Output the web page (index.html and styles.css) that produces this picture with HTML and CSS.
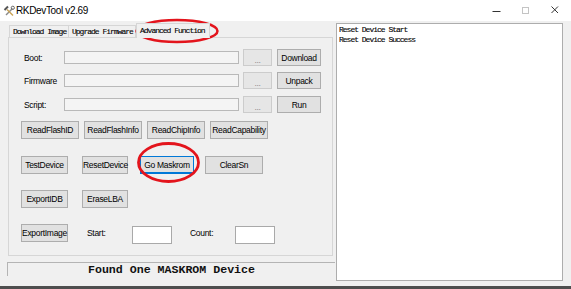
FILE: index.html
```html
<!DOCTYPE html>
<html>
<head>
    <title>RKDevTool v2.69</title>
    <link rel="stylesheet" href="styles.css">
</head>
<body>
<div class="window">
    <div class="titlebar">
        <svg class="app-icon" viewBox="0 0 12 12">
            <path d="M3 10 L9.5 3.5" stroke="#8a8a8a" stroke-width="1.4" fill="none"/>
            <circle cx="9.8" cy="2.8" r="1.6" stroke="#6a6a6a" stroke-width="1" fill="none"/>
            <path d="M10 10.5 L4 4.5" stroke="#c9a255" stroke-width="1.4" fill="none"/>
            <path d="M1.5 5 L5 1.5" stroke="#555" stroke-width="2" fill="none"/>
        </svg>
        <span class="title">RKDevTool v2.69</span>
        <div class="controls">
            <span class="ctl"><svg viewBox="0 0 29 21"><path d="M10.5 11.5 H18.5" stroke="#333" stroke-width="1"/></svg></span>
            <span class="ctl"><svg viewBox="0 0 29 21"><rect x="11.5" y="7.5" width="6" height="6" stroke="#c4c4c4" fill="none"/></svg></span>
            <span class="ctl"><svg viewBox="0 0 29 21"><path d="M11.5 6.5 L18 13 M18 6.5 L11.5 13" stroke="#333" stroke-width="1"/></svg></span>
        </div>
    </div>

    <div class="main">
        <div class="left">
            <div class="tabs">
                <div class="tab tab-download">Download Image</div>
                <div class="tab tab-upgrade">Upgrade Firmware</div>
                <div class="tab tab-advanced active">Advanced Function</div>
            </div>

            <div class="panel">
                <div class="file-row">
                    <span class="field-label">Boot:</span>
                    <input class="path-input" type="text">
                    <button class="btn btn-dots">...</button>
                    <button class="btn btn-action">Download</button>
                </div>
                <div class="file-row">
                    <span class="field-label">Firmware</span>
                    <input class="path-input" type="text">
                    <button class="btn btn-dots">...</button>
                    <button class="btn btn-action">Unpack</button>
                </div>
                <div class="file-row row-script">
                    <span class="field-label">Script:</span>
                    <input class="path-input" type="text">
                    <button class="btn btn-dots">...</button>
                    <button class="btn btn-action">Run</button>
                </div>

                <div class="btn-row row-read">
                    <button class="btn btn-read">ReadFlashID</button>
                    <button class="btn btn-read">ReadFlashInfo</button>
                    <button class="btn btn-read">ReadChipInfo</button>
                    <button class="btn btn-read">ReadCapability</button>
                </div>
                <div class="btn-row row-device">
                    <button class="btn btn-first">TestDevice</button>
                    <button class="btn btn-second">ResetDevice</button>
                    <button class="btn btn-maskrom focused">Go Maskrom</button>
                    <button class="btn btn-clear">ClearSn</button>
                </div>
                <div class="btn-row">
                    <button class="btn btn-first">ExportIDB</button>
                    <button class="btn btn-second">EraseLBA</button>
                </div>
                <div class="btn-row">
                    <button class="btn btn-first">ExportImage</button>
                    <span class="small-label">Start:</span>
                    <input class="num-input" type="text">
                    <span class="small-label label-count">Count:</span>
                    <input class="num-input" type="text">
                </div>
            </div>

            <div class="status">Found One MASKROM Device</div>
        </div>

        <div class="log">
            <div>Reset Device Start</div>
            <div>Reset Device Success</div>
        </div>
    </div>

    <div class="edge"></div>

    <svg class="marks" viewBox="0 0 571 289">
        <ellipse cx="177" cy="31" rx="40.5" ry="11" fill="none" stroke="#e3141c" stroke-width="2.5"/>
        <ellipse cx="168.5" cy="162.5" rx="30" ry="19" fill="none" stroke="#e3141c" stroke-width="2.8"/>
    </svg>
</div>
</body>
</html>
```

FILE: styles.css
```css
body {
    margin: 0;
    font-family: "Liberation Sans", Arial, sans-serif;
    background-color: #f0f0f0;
}

.window {
    position: relative;
    width: 571px;
    height: 289px;
    display: flex;
    flex-direction: column;
    overflow: hidden;
}

/* title bar */
.titlebar {
    height: 21px;
    flex-shrink: 0;
    display: flex;
    align-items: center;
    background-color: #fff;
}

.app-icon {
    width: 12px;
    height: 12px;
    margin-left: 3px;
    margin-right: 1px;
}

.title {
    font-size: 10px;
    letter-spacing: -0.35px;
    color: #000;
}

.controls {
    margin-left: auto;
    margin-right: 2px;
    display: flex;
}

.ctl {
    width: 29px;
    height: 21px;
}

.ctl svg {
    display: block;
    width: 29px;
    height: 21px;
}

/* client area */
.main {
    flex: 1;
    display: flex;
}

.left {
    width: 336px;
    flex-shrink: 0;
}

.tabs {
    height: 16px;
    display: flex;
    align-items: flex-end;
    padding-left: 9px;
}

.tab {
    height: 12px;
    line-height: 12px;
    box-sizing: border-box;
    padding: 0 3px;
    border: 1px solid #d6d6d6;
    border-bottom: none;
    font-family: "Liberation Mono", monospace;
    font-size: 8px;
    letter-spacing: -1px;
    -webkit-text-stroke: 0.12px #000;
    color: #000;
    white-space: nowrap;
}

.tab-download { width: 60px; }
.tab-upgrade { width: 67px; border-left: none; }
.tab-advanced { width: 74px; }

.tab.active {
    position: relative;
    z-index: 1;
    height: 15px;
    line-height: 13px;
    margin-bottom: -1px;
    background-color: #f0f0f0;
}

.panel {
    margin-left: 8px;
    width: 325px;
    height: 219px;
    box-sizing: border-box;
    border: 1px solid #d6d6d6;
    padding-top: 11px;
}

.file-row {
    height: 17px;
    display: flex;
    align-items: center;
    padding-left: 15px;
}

.file-row + .file-row {
    margin-top: 6px;
}

.file-row.row-script {
    margin-top: 7px;
}

.field-label {
    width: 40px;
    font-size: 8.5px;
    letter-spacing: -0.3px;
    color: #000;
}

.path-input {
    width: 175px;
    height: 13px;
    box-sizing: border-box;
    margin: 0 4px 0 0;
    padding: 0;
    border: 1px solid #b9b9b9;
    background-color: #f4f4f4;
}

.btn {
    height: 18px;
    box-sizing: border-box;
    padding: 0;
    margin: 0;
    border: 1px solid #adadad;
    background-color: #e1e1e1;
    font-family: "Liberation Sans", Arial, sans-serif;
    font-size: 8.5px;
    letter-spacing: -0.3px;
    color: #000;
    white-space: nowrap;
}

.btn-dots {
    width: 29px;
    height: 17px;
    margin-right: 5px;
    border-color: #cccccc;
    background-color: #e6e6e6;
    color: #8c8c8c;
    padding-top: 4px;
}

.btn-action {
    width: 44px;
    height: 17px;
}

.btn-row {
    height: 18px;
    display: flex;
    align-items: center;
    padding-left: 12px;
    margin-top: 16px;
}

.btn-row.row-read {
    margin-top: 8px;
}

.btn-row.row-device {
    margin-top: 17px;
}

.btn-read {
    width: 58px;
    margin-right: 5px;
}

.btn-first { width: 47px; }
.btn-second { width: 46px; margin-left: 14px; }
.btn-maskrom { width: 54px; margin-left: 12px; }
.btn-clear { width: 58px; margin-left: 11px; }

.btn.focused {
    border-color: #0078d7;
    border-bottom-width: 2px;
}

.small-label {
    width: 45px;
    margin-left: 19px;
    font-size: 8.5px;
    letter-spacing: -0.3px;
}

.small-label.label-count {
    margin-left: 18px;
}

.num-input {
    width: 40px;
    height: 18px;
    box-sizing: border-box;
    margin: 3px 0 0 0;
    padding: 0;
    border: 1px solid #a9a9a9;
    background-color: #fff;
}

.status {
    margin: 6px 0 0 7px;
    width: 328px;
    height: 14px;
    box-sizing: border-box;
    border-top: 1px solid #b4b4b4;
    border-left: 1px solid #b4b4b4;
    font-family: "Liberation Mono", monospace;
    font-weight: bold;
    font-size: 11.6px;
    line-height: 13px;
    text-align: center;
    color: #111;
}

.log {
    margin-top: 2px;
    width: 227px;
    height: 258px;
    box-sizing: border-box;
    border: 1px solid #adadad;
    background-color: #fff;
    padding: 1px 0 0 2px;
    font-family: "Liberation Mono", monospace;
    font-size: 8px;
    letter-spacing: -1px;
    -webkit-text-stroke: 0.12px #000;
    line-height: 10px;
    color: #000;
}

.edge {
    height: 3px;
    flex-shrink: 0;
    background-color: #4e4e4e;
}

.marks {
    position: absolute;
    left: 0;
    top: 0;
    width: 571px;
    height: 289px;
    pointer-events: none;
}
```
